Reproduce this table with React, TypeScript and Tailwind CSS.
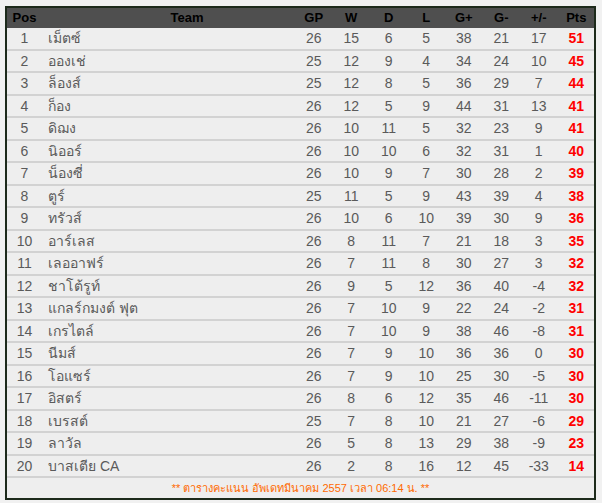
import React from "react";

type Row = [number, string, number, number, number, number, number, number, number, number];

const rows: Row[] = [
  [1, "เม็ตซ์", 26, 15, 6, 5, 38, 21, 17, 51],
  [2, "อองเช่", 25, 12, 9, 4, 34, 24, 10, 45],
  [3, "ล็องส์", 25, 12, 8, 5, 36, 29, 7, 44],
  [4, "ก็อง", 26, 12, 5, 9, 44, 31, 13, 41],
  [5, "ดิฌง", 26, 10, 11, 5, 32, 23, 9, 41],
  [6, "นิออร์", 26, 10, 10, 6, 32, 31, 1, 40],
  [7, "น็องซี่", 26, 10, 9, 7, 30, 28, 2, 39],
  [8, "ตูร์", 25, 11, 5, 9, 43, 39, 4, 38],
  [9, "ทรัวส์", 26, 10, 6, 10, 39, 30, 9, 36],
  [10, "อาร์เลส", 26, 8, 11, 7, 21, 18, 3, 35],
  [11, "เลออาฟร์", 26, 7, 11, 8, 30, 27, 3, 32],
  [12, "ชาโต้รูท์", 26, 9, 5, 12, 36, 40, -4, 32],
  [13, "แกลร์กมงต์ ฟุต", 26, 7, 10, 9, 22, 24, -2, 31],
  [14, "เกรไตล์", 26, 7, 10, 9, 38, 46, -8, 31],
  [15, "นีมส์", 26, 7, 9, 10, 36, 36, 0, 30],
  [16, "โอแซร์", 26, 7, 9, 10, 25, 30, -5, 30],
  [17, "อิสตร์", 26, 8, 6, 12, 35, 46, -11, 30],
  [18, "เบรสต์", 25, 7, 8, 10, 21, 27, -6, 29],
  [19, "ลาวัล", 26, 5, 8, 13, 29, 38, -9, 23],
  [20, "บาสเตีย CA", 26, 2, 8, 16, 12, 45, -33, 14],
];

const grid = "grid grid-cols-[35px_253px_repeat(8,37.5px)] items-center";

export default function App() {
  return (
    <div
      className="w-[602px] h-[503px] bg-[#f1f1f1] pt-[6px] pl-[5px]"
      style={{ fontFamily: '"Liberation Sans", Arial, "Noto Sans", sans-serif' }}
    >
      <div className="w-[591px] border-2 border-[#1d2a1b] bg-[#eeeeee] overflow-hidden">
        <div className={`${grid} h-[20px] bg-[#4f4f4f] text-[13px] font-bold text-black`}>
          <div className="text-center">Pos</div>
          <div className="text-center pl-[37px]">Team</div>
          <div className="text-center">GP</div>
          <div className="text-center">W</div>
          <div className="text-center">D</div>
          <div className="text-center">L</div>
          <div className="text-center">G+</div>
          <div className="text-center">G-</div>
          <div className="text-center">+/-</div>
          <div className="text-center">Pts</div>
        </div>
        {rows.map((r, i) => (
          <div
            key={r[0]}
            className={`${grid} ${i % 2 === 0 ? "h-[23px]" : "h-[22px]"} border-b-2 border-[#d2d2d2] text-[14px] text-[#5a5a5a]`}
          >
            <div className="text-center">{r[0]}</div>
            <div className="pl-[6px] whitespace-nowrap">{r[1]}</div>
            {r.slice(2, 9).map((v, j) => (
              <div key={j} className="text-center">
                {v}
              </div>
            ))}
            <div className="text-center font-bold text-[#ff0000] text-[14px]">{r[9]}</div>
          </div>
        ))}
        <div className="h-[20px] flex items-center justify-center text-[11px] text-[#ff6a00]">
          ** ตารางคะแนน อัพเดทมีนาคม 2557 เวลา 06:14 น. **
        </div>
      </div>
    </div>
  );
}
